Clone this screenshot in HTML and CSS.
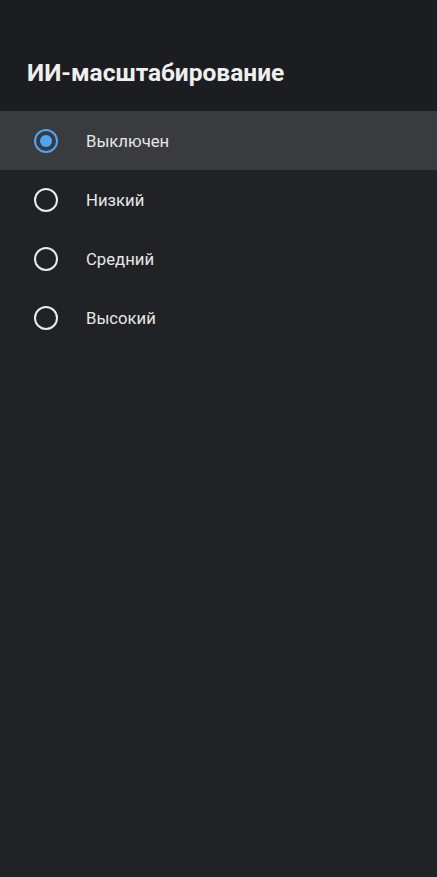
FILE: index.html
```html
<!DOCTYPE html>
<html>
<head>
    <meta charset="UTF-8">
    <title>ИИ-масштабирование</title>
    <link rel="stylesheet" href="styles.css">
</head>
<body>
    <div class="page-header">
        <h1 class="page-title">ИИ-масштабирование</h1>
    </div>

    <div class="option-list">
        <div class="option-row selected">
            <span class="radio checked"></span>
            <span class="option-label">Выключен</span>
        </div>
        <div class="option-row">
            <span class="radio"></span>
            <span class="option-label">Низкий</span>
        </div>
        <div class="option-row">
            <span class="radio"></span>
            <span class="option-label">Средний</span>
        </div>
        <div class="option-row">
            <span class="radio"></span>
            <span class="option-label">Высокий</span>
        </div>
    </div>
</body>
</html>
```

FILE: styles.css
```css
* {
    margin: 0;
    padding: 0;
    box-sizing: border-box;
}

html, body {
    height: 100%;
}

body {
    font-family: Roboto, "Noto Sans", Arial, sans-serif;
    background: #212226;
    color: #ececec;
}

.page-header {
    background: #1c1d20;
    height: 111px;
    padding: 0 27px;
    display: flex;
    align-items: center;
    padding-top: 34px;
}

.page-title {
    font-size: 24.5px;
    font-weight: 700;
    color: #efefef;
}

.option-row {
    height: 59px;
    display: flex;
    align-items: center;
    padding-left: 34px;
    padding-top: 1px;
}

.option-row.selected {
    background: #3a3b3f;
}

.radio {
    width: 24px;
    height: 24px;
    border: 2.4px solid #ececec;
    border-radius: 50%;
    display: flex;
    align-items: center;
    justify-content: center;
    flex-shrink: 0;
}

.radio.checked {
    border-color: #4ea5f5;
}

.radio.checked::after {
    content: "";
    width: 12px;
    height: 12px;
    border-radius: 50%;
    background: #4ea5f5;
}

.option-label {
    margin-left: 28px;
    font-size: 16.7px;
    color: #e6e6e6;
}
```
